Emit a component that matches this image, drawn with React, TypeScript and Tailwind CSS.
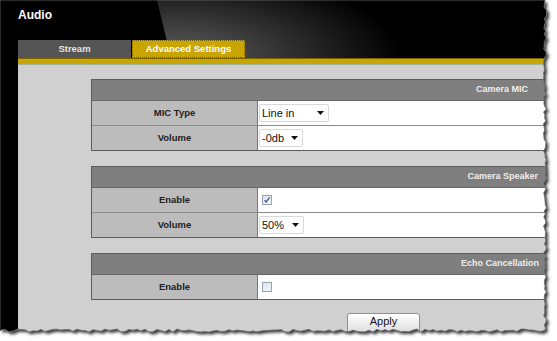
import type { ReactNode } from 'react';

function Arrow() {
  return (
    <svg width="7" height="4" viewBox="0 0 7 4" className="shrink-0">
      <polygon points="0,0 7,0 3.5,4" fill="#111" />
    </svg>
  );
}

function Select({ value, w }: { value: string; w: string }) {
  return (
    <div className={`ml-[1px] flex items-center justify-between h-[18px] border border-[#d9d9d9] rounded-[2px] bg-white pl-[2px] pr-[4px] text-[11px] text-[#111] ${w}`}>
      <span>{value}</span>
      <Arrow />
    </div>
  );
}

function Checkbox({ checked }: { checked?: boolean }) {
  return (
    <div className="ml-[4px] w-[10px] h-[10px] border border-[#97a3b0] bg-gradient-to-br from-[#dfe4ea] to-[#f5f7f9] flex items-center justify-center">
      {checked && (
        <svg width="8" height="8" viewBox="0 0 8 8">
          <path d="M1.5 4.2 L3.2 6 L6.6 1.4" fill="none" stroke="#3b55a8" strokeWidth="1.3" />
        </svg>
      )}
    </div>
  );
}

type Row = { label: string; control: ReactNode };

function Section({ title, rows, pr }: { title: string; rows: Row[]; pr: string }) {
  return (
    <div className="w-[470px] border-l border-t border-[#5e5e5e]">
      <div className={`h-[21px] bg-[#7f7f7f] border-b border-[#666] flex items-center justify-end text-[9px] font-bold text-[#eeeeee] ${pr}`}>
        {title}
      </div>
      {rows.map((r, i) => (
        <div
          key={r.label}
          className={`flex h-[25px] border-b ${i < rows.length - 1 ? 'border-[#8c8c8c]' : 'border-[#5e5e5e]'}`}
        >
          <div className="w-[166px] bg-[#bcbcbc] border-r border-[#777] flex items-center justify-center text-[9.5px] font-bold text-[#222]">
            {r.label}
          </div>
          <div className="flex-1 bg-white flex items-center">{r.control}</div>
        </div>
      ))}
    </div>
  );
}

// pseudo random jag for the torn screenshot edge
function jag(i: number, amp: number) {
  const v = Math.sin(i * 12.9898) * 43758.5453;
  return (v - Math.floor(v) - 0.5) * 2 * amp;
}

function TornEdge() {
  const pts: string[] = ['0,0', '545,0'];
  for (let y = 4; y < 329; y += 3) pts.push(`${(545 + jag(y, 1.6)).toFixed(1)},${y}`);
  pts.push('545,330');
  for (let x = 541; x > 0; x -= 4) pts.push(`${x},${(330.5 + jag(x + 7, 1.6)).toFixed(1)}`);
  pts.push('0,331');
  const page = 'M' + pts.join(' L') + ' Z';
  const outside = 'M0,0 H557 V341 H0 Z ' + page;
  return (
    <svg className="absolute inset-0 pointer-events-none" width="557" height="341" viewBox="0 0 557 341">
      <defs>
        <clipPath id="outside">
          <path d={outside} clipRule="evenodd" />
        </clipPath>
        <filter id="blur" x="-10%" y="-10%" width="120%" height="120%">
          <feGaussianBlur stdDeviation="1.4" />
        </filter>
      </defs>
      <path d={outside} fill="#fff" fillRule="evenodd" />
      <g clipPath="url(#outside)">
        <path d={page} fill="#3a3a3a" transform="translate(2.5,2.5)" filter="url(#blur)" />
      </g>
      <path d={page} fill="none" stroke="#6a6a6a" strokeWidth="0.8" />
    </svg>
  );
}

export default function App() {
  return (
    <div className="relative w-[557px] h-[341px] overflow-hidden bg-white font-['Liberation_Sans',Arial,sans-serif]">
      <div className="flex flex-col w-[552px] h-[336px] bg-black">
        {/* Header */}
        <div className="relative h-[58px] shrink-0 flex flex-col">
          <div className="absolute left-[157px] top-0 right-0 h-[58px] bg-[radial-gradient(ellipse_230px_90px_at_4%_100%,#5e5e5e_0%,#444_30%,#222_65%,#000_100%)] [clip-path:polygon(0_0,100%_0,100%_100%,14px_100%)]" />
          <div className="relative h-[40px] pl-[18px] pt-[6px] text-[12px] font-bold text-white">Audio</div>
          <div className="relative flex gap-px pl-[18px] h-[18px]">
            <div className="w-[113px] bg-[#555555] flex items-center justify-center text-[9.5px] font-bold text-[#e2e2e2]">Stream</div>
            <div className="w-[113px] bg-[#c9a502] border border-dotted border-[#6e5c10] flex items-center justify-center text-[9.5px] font-bold text-white">
              Advanced Settings
            </div>
          </div>
        </div>

        <div className="ml-[18px] h-[6px] bg-[#c9a502] border-t border-[#7a6400]" />
        <div className="ml-[18px] h-px bg-[#9db59b]" />

        {/* Body */}
        <div className="ml-[18px] flex-1 bg-[#d0d0d0] pl-[73px] pt-[14px] flex flex-col">
          <Section
            title="Camera MIC"
            pr="pr-[33px]"
            rows={[
              { label: 'MIC Type', control: <Select value="Line in" w="w-[70px]" /> },
              { label: 'Volume', control: <Select value="-0db" w="w-[44px]" /> },
            ]}
          />
          <div className="mt-[15px]">
            <Section
              title="Camera Speaker"
              pr="pr-[23px]"
              rows={[
                { label: 'Enable', control: <Checkbox checked /> },
                { label: 'Volume', control: <Select value="50%" w="w-[45px]" /> },
              ]}
            />
          </div>
          <div className="mt-[15px]">
            <Section title="Echo Cancellation" pr="pr-[22px]" rows={[{ label: 'Enable', control: <Checkbox /> }]} />
          </div>
          <div className="mt-[13px] ml-[256px] w-[73px] h-[20px] border border-[#8f8f8f] rounded-[3px] bg-gradient-to-b from-white to-[#dedede] flex items-start justify-center pt-[1px] text-[11px] leading-[13px] text-[#111]">
            Apply
          </div>
        </div>
      </div>
      <TornEdge />
    </div>
  );
}
